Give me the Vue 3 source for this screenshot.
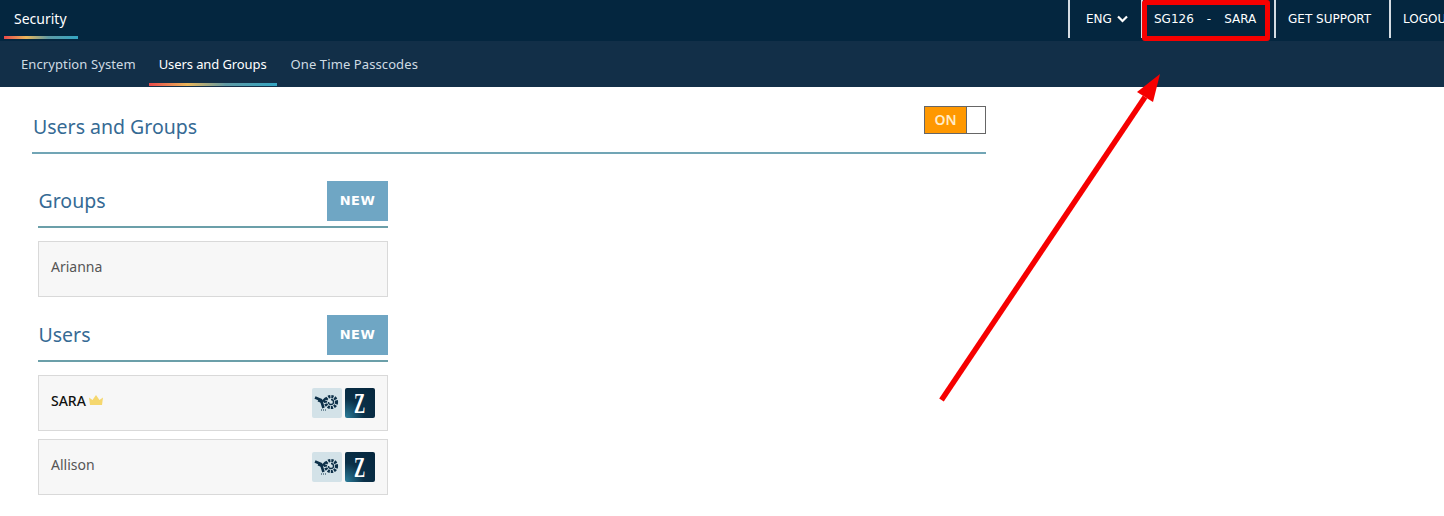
<script setup>
const navs = [
  { label: 'Encryption System', active: false },
  { label: 'Users and Groups', active: true },
  { label: 'One Time Passcodes', active: false },
]
const users = [
  { name: 'SARA', owner: true },
  { name: 'Allison', owner: false },
]
</script>

<template>
  <div class="page">
    <header class="top">
      <div class="brand">Security<span class="rainbow"></span></div>
      <div class="tools">
        <div class="tool lang">ENG
          <svg width="11" height="8" viewBox="0 0 11 8"><path d="M1 1.500 5.500 6 10 1.500" fill="none" stroke="#fff" stroke-width="2.200"/></svg>
        </div>
        <div class="tool acct"><span>SG126</span><span>-</span><span>SARA</span></div>
        <div class="tool support">GET SUPPORT</div>
        <div class="tool logout">LOGOUT</div>
      </div>
    </header>
    <nav class="sub">
      <a v-for="n in navs" :key="n.label" class="tab" :class="{ on: n.active }">{{ n.label }}<span v-if="n.active" class="rainbow"></span></a>
    </nav>
    <main class="panel">
      <div class="panel-head">
        <h1>Users and Groups</h1>
        <div class="toggle"><span class="toggle-on">ON</span><span class="toggle-off"></span></div>
      </div>
      <section class="column">
        <div class="sec-head"><h2>Groups</h2><button class="new">NEW</button></div>
        <div class="row"><span class="name">Arianna</span></div>
        <div class="sec-head second"><h2>Users</h2><button class="new">NEW</button></div>
        <div v-for="u in users" :key="u.name" class="row user">
          <span class="name" :class="{ owner: u.owner }">{{ u.name }}</span>
          <svg v-if="u.owner" class="crown" width="16" height="12" viewBox="0 0 16 12"><path d="M1 3.500 4.500 6 8 1l3.500 5L15 3.500 14 11H2Z" fill="#f5d76e"/></svg>
          <div class="badges">
            <span class="badge light">
              <svg width="30" height="30" viewBox="0 0 30 30">
                <g fill="none" stroke="#0d3049">
                  <circle cx="19" cy="14" r="5.500" stroke-width="3.200" stroke-dasharray="2.200 1"/>
                  <path d="M19 11.500a2.500 2.500 0 1 1-2.500 2.500" stroke-width="1.300"/>
                  <path d="M3 9.500 9 12 11.500 20" stroke-width="2.600"/>
                  <path d="M14 10 10 14 6 12.500" stroke-width="2.200"/>
                  <path d="M9 22h5" stroke-width="1.200" stroke-dasharray="1 1"/>
                </g>
              </svg>
            </span>
            <span class="badge dark"><span class="z">Z</span></span>
          </div>
        </div>
      </section>
    </main>
    <div class="redbox"></div>
    <svg class="arrow" width="240" height="340" viewBox="0 0 240 340">
      <path d="M2.500 327 206 24" stroke="#f60000" stroke-width="5.500" fill="none"/>
      <path d="M221 1 198 19 214 29Z" fill="#f60000"/>
    </svg>
  </div>
</template>

<style scoped>
.page { position: relative; width: 1444px; height: 516px; overflow: hidden; background: #fff; font-family: "Noto Sans", "Open Sans", sans-serif; }
.top { height: 41px; background: #04263f; display: flex; justify-content: space-between; color: #fff; }
.brand { position: relative; margin-left: 4px; width: 74px; padding: 9px 0 0 10px; box-sizing: border-box; font-size: 14px; line-height: 19px; }
.rainbow { position: absolute; left: 0; right: 0; bottom: 2px; height: 3px; background: linear-gradient(90deg, #e8494a, #eab65a 30%, #5f9aa5 60%, #33a5c2); }
.tools { display: flex; height: 38px; font-family: "DejaVu Sans", sans-serif; font-size: 12px; }
.tool { display: flex; align-items: center; box-sizing: border-box; border-left: 2px solid #d5dce2; white-space: nowrap; height: 38px; }
.lang { width: 73px; padding-left: 16px; gap: 5px; }
.acct { width: 133px; padding-left: 11px; gap: 13px; }
.support { width: 115px; padding-left: 12px; }
.logout { width: 55px; padding-left: 12px; overflow: hidden; }
.sub { height: 46px; background: #122f48; display: flex; padding-left: 11px; }
.tab { position: relative; padding: 14px 10px 0; margin-right: 4px; font-size: 13px; line-height: 19px; color: #cfdbe3; letter-spacing: .1px; white-space: nowrap; }
.tab:first-child { margin-right: 3px; }
.tab.on { color: #fff; letter-spacing: -.1px; }
.tab .rainbow { bottom: 1px; }
.panel { width: 954px; margin-left: 32px; }
.panel-head { height: 67px; box-sizing: border-box; border-bottom: 2px solid #71a5b5; display: flex; justify-content: space-between; padding-top: 19px; }
h1 { margin: 7px 0 0 1px; font-size: 19.500px; line-height: 27px; font-weight: 400; color: #356a94; }
.toggle { display: flex; width: 62px; height: 28px; box-sizing: border-box; border: 1px solid #666; }
.toggle-on { width: 42px; background: #ff9800; color: #ffecc8; font-size: 14px; font-weight: 600; display: flex; align-items: center; justify-content: center; border-right: 1px solid #666; padding-bottom: 2px; box-sizing: border-box; }
.toggle-off { flex: 1; background: #fff; }
.column { width: 350px; margin: 27px 0 0 6px; }
.sec-head { display: flex; justify-content: space-between; height: 47px; box-sizing: border-box; border-bottom: 2px solid #6b9fa9; align-items: flex-start; }
.sec-head.second { margin-top: 18px; }
h2 { margin: 6px 0 0 .5px; font-size: 19.500px; line-height: 27px; font-weight: 400; color: #356a94; }
.new { width: 61px; height: 40px; border: 0; background: #6fa6c4; color: #fff; font-family: "DejaVu Sans", sans-serif; font-weight: 700; font-size: 13px; letter-spacing: .5px; padding: 0 0 2px; }
.row { box-sizing: border-box; height: 56px; margin-top: 13px; background: #f7f7f7; border: 1px solid #d9d9d9; padding: 0 12px; display: flex; align-items: center; }
.row.user + .row.user { margin-top: 8px; }
.name { font-size: 14px; color: #555; position: relative; top: -3px; }
.name.owner { color: #111; font-weight: 500; }
.crown { margin-left: 2px; position: relative; top: -3px; }
.badges { margin-left: auto; display: flex; gap: 3px; }
.badge { width: 30px; height: 30px; border-radius: 2px; display: flex; align-items: center; justify-content: center; }
.light { background: #d3e2e8; }
.dark { background: radial-gradient(circle at 0 100%, #2c7f9c, #0a3048 45%, #05263d); color: #fff; font-family: "Liberation Serif", serif; font-weight: 700; font-size: 29px; }
.z { display: inline-block; transform: scaleX(.58); }
.redbox { position: absolute; left: 1142px; top: 0; width: 128px; height: 41px; box-sizing: border-box; border: 5px solid #f60000; border-radius: 3px; }
.arrow { position: absolute; left: 939px; top: 73px; }
</style>
